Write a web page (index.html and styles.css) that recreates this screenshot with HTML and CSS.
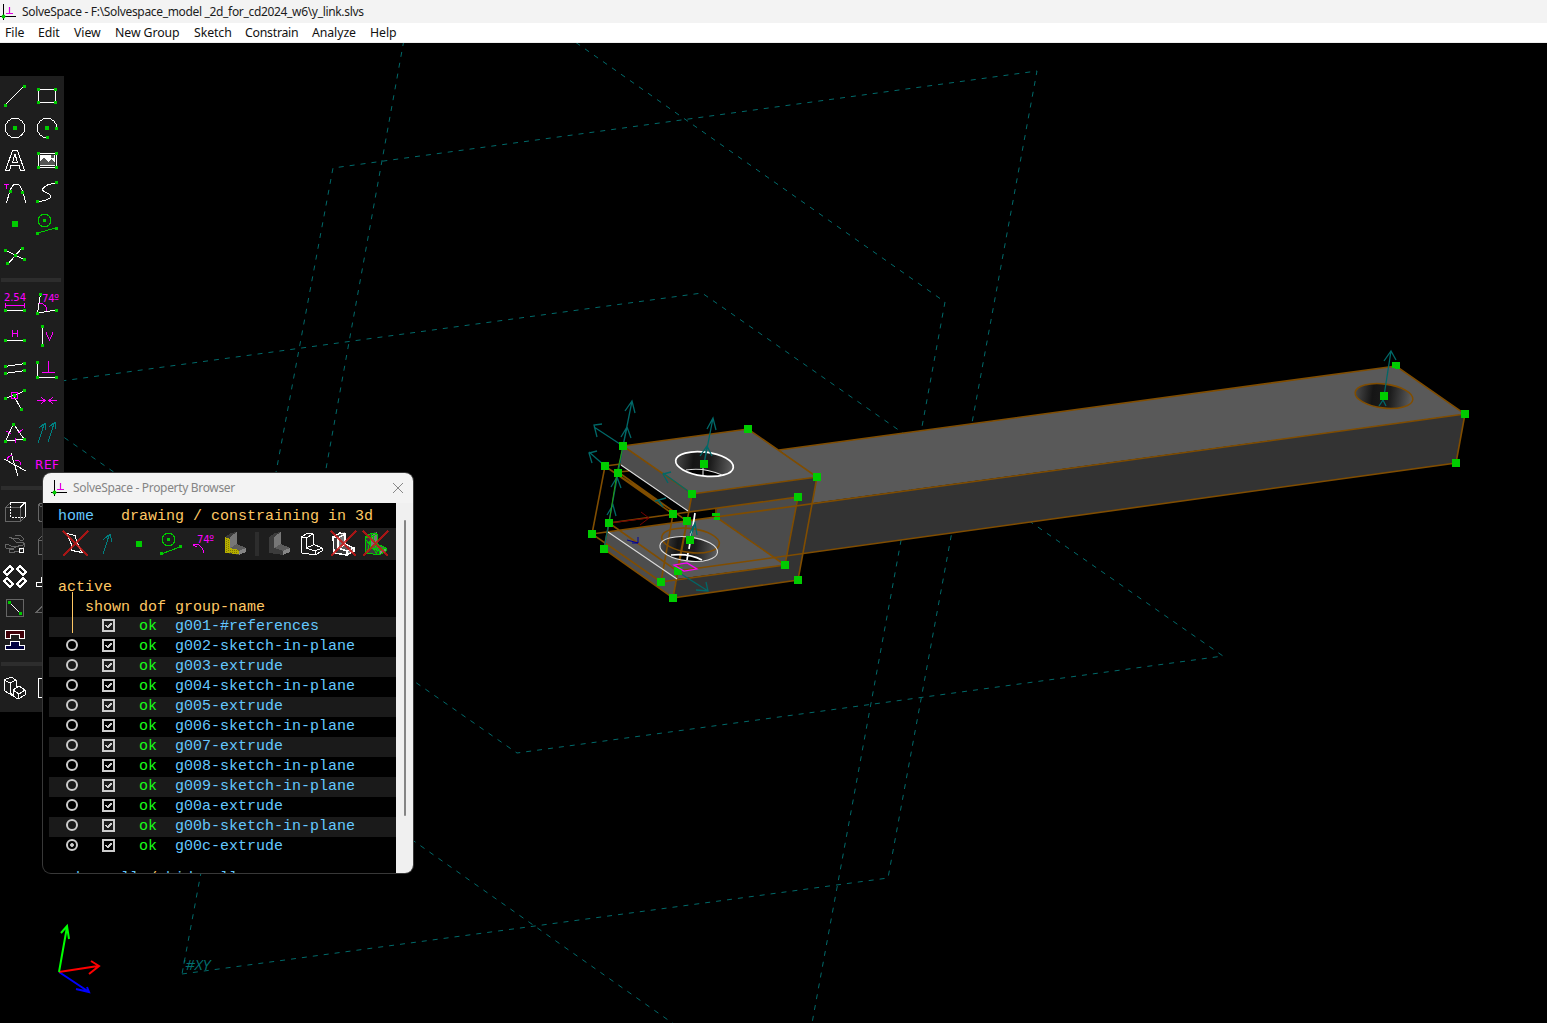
FILE: index.html
```html
<!DOCTYPE html>
<html lang="en">
<head>
<meta charset="utf-8">
<title>SolveSpace</title>
<link rel="stylesheet" href="styles.css">
</head>
<body>
<svg class="defs" width="0" height="0">
  <defs>
    <linearGradient id="hole"><stop offset="0" stop-color="#4a4a4a"/><stop offset=".3" stop-color="#151515"/><stop offset=".6" stop-color="#1c1c1c"/><stop offset="1" stop-color="#606060"/></linearGradient>
    <symbol id="logo" viewBox="0 0 16 16"><path d="M3.500 0v16M0 12.500h16" stroke="#000" fill="none"/><path d="M9.500 3v7M6 9.500h7" stroke="#e000e0" stroke-width="1.200" fill="none"/><circle cx="3.500" cy="12.500" r="1.900" fill="#0c0"/></symbol>
    <symbol id="bracket" viewBox="0 0 32 32"><g stroke="none"><path d="M6 9l6-4 6-1v12l9 4v4l-7 3-14-2z" fill="#3c3c3c"/><path d="M11 9l7-5v12l-7 4z" fill="#777"/><path d="M11 20l7-4 9 4-7 3z" fill="#5c5c5c"/><path d="M20 23l7-3v4l-7 3z" fill="#858585"/></g></symbol>
    <symbol id="bracketWire" viewBox="0 0 32 32"><path fill="none" d="M6 9l7-4 5 1v10l9 4v3l-7 4-13-2z M6 9l5 1v10l9 3v4 M11 10l7-4 M11 20l7-3 M20 23l7-3"/></symbol>
    <symbol id="tick" viewBox="0 0 13 13"><path d="M1 1h11v11H1z" fill="none" stroke="#ccc" stroke-width="2"/><path d="M3.500 6l2.500 2.500L9.500 4" fill="none" stroke="#ccc" stroke-width="2"/></symbol>
  </defs>
</svg>
<header class="titlebar"><svg class="logo"><use href="#logo"/></svg><span class="title">SolveSpace - F:\Solvespace_model _2d_for_cd2024_w6\y_link.slvs</span></header>
<nav class="menu"><span class="file">File</span><span class="edit">Edit</span><span class="view">View</span><span class="group">New Group</span><span class="sketch">Sketch</span><span class="constrain">Constrain</span><span class="analyze">Analyze</span><span class="help">Help</span></nav>
<main class="workspace">
<svg class="scene" viewBox="0 43 1547 980">
  <g class="plane">
    <path d="M182 974L888 878L1037 71L333 168Z"/>
    <path d="M-4 390L702 293L1223 656L517 753Z"/>
    <path d="M423-65L945 302L796 1110L276 744Z"/>
  </g>
  <text class="plane-name" x="182" y="970">'#XY</text>
  <path fill="#595959" d="M779 450L1396 366L1465 414L806 504V470Z"/>
  <path fill="#333" d="M806 504L1465 414L1456 463L800 554Z"/>
  <path fill="#4b4b4b" d="M717 508L798 497L785 565L716 517Z"/>
  <path fill="#595959" d="M608 532L687 521L716 517L785 565L677 579Z"/>
  <path fill="#4d4d4d" d="M608 532L677 579L673 598L604 549Z"/>
  <path fill="#4d4d4d" d="M623 446L692 494L689 512L620 464Z"/>
  <path fill="#595959" d="M623 446L748 429L817 477L692 494Z"/>
  <path fill="#333" d="M692 494L817 477L798 580L673 598L677 579L785 565L798 497L689 512Z"/>
  <g class="hole"><ellipse cx="704.5" cy="464" rx="29" ry="12" transform="rotate(7 704.5 464)"/><ellipse cx="688.7" cy="549" rx="29" ry="12" transform="rotate(7 688.7 549)"/><ellipse cx="1384" cy="396" rx="29" ry="12" transform="rotate(7 1384 396)"/></g>
  <path d="M686 470Q703 466 723 475L714 476Q697 476 686 470ZM671 555Q688 553 704 561Q683 561 671 555Z" fill="#000"/>
  <g class="edge">
    <path d="M779 450L1396 366L1465 414L1456 463L677 571M592 534L1465 414M623 446L748 429L817 477L692 494ZM817 477L798 580L673 598L604 549M609 523L798 497L785 565L661 582L592 534L605 466L673 514L661 582M785 565L716 517V509M692 494L673 598M609 523L677 571L687 521L618 472L629 471M605 466L621 464M609 469L673 511M609 523L604 549"/>
    <ellipse cx="690.5" cy="540.5" rx="29" ry="12" transform="rotate(7 690.5 540.5)"/><ellipse cx="1384" cy="396" rx="29" ry="12" transform="rotate(7 1384 396)"/>
  </g>
  <g class="white-edge"><path d="M621 465L688 511M608 532L677 579"/><ellipse class="strong" cx="704.5" cy="464" rx="29" ry="12" transform="rotate(7 704.5 464)"/><ellipse cx="688.7" cy="549" rx="29" ry="12" transform="rotate(7 688.7 549)"/><path d="M686 470Q704 467 722 475M703 466V475"/><path class="strong" d="M671 555Q689 553 702 560M695 513L693 526M692 530L689 549M688 553L687 560"/></g>
  <g class="normal">
    <path d="M623 446L632 401M625 411L632 401L635 413M623 446L627 427M621 437L627 427L631 438M623 446L594 427M602 424L594 425L597 437M605 466L589 452M597 451L589 453L592 463M704 464L713 418M707 429L713 418L716 430M704 464L707 446M700 456L707 446L712 456M692 494L663 473M671 472L663 474L668 483M678 572L708 591M706 582L708 591L696 590M604 549L623 446M611 487L617 477L621 488M607 515L613 505L616 516M655 501L666 498M658 500L663 507M690 540L695 523M690 533L695 523L697 535M1384 396L1391 351M1384 361L1391 351L1396 360M1379 406L1383 400L1386 406"/>
  </g>
  <path d="M623 446L617 473L609 523" fill="none" stroke="#2a9f12"/>
  <path d="M609 523L649 518M641 512L649 518L640 525" fill="none" stroke="#700"/><path d="M627 540L638 543M638 537V543L632 543" fill="none" stroke="#009"/>
  <path class="point" d="M619 442h8v8h-8zM744 425h8v8h-8zM813 473h8v8h-8zM688 490h8v8h-8zM601 462h8v8h-8zM614 469h8v8h-8zM794 493h8v8h-8zM605 519h8v8h-8zM588 530h8v8h-8zM600 545h8v8h-8zM669 510h8v8h-8zM683 517h8v8h-8zM712 513h8v3h-8zM714 517h6v3h-6zM686 536h8v8h-8zM781 561h8v8h-8zM794 576h8v8h-8zM657 578h8v8h-8zM669 594h8v8h-8zM674 567h8v8h-8zM700 460h8v8h-8zM1392 362h8v6h-8zM1395 367h5v2h-5zM1461 410h8v8h-8zM1452 459h8v8h-8zM1380 392h8v8h-8z"/>
  <path d="M674 565L687 563L697 569L684 571Z" fill="none" stroke="#f0f" stroke-width="1.200"/>
  <g fill="none" stroke-width="2"><path stroke="#00f" d="M59 972L89 992M87 987L89 992L76 989"/><path stroke="red" d="M59 972L98 966M91 961L99 966L89 974"/><path stroke="lime" d="M59 972L67 927M61 933L67 926L69 939"/></g>
</svg>

<aside class="toolbar">
  <svg><path d="M5 25L24 6"/><path class="pts" d="M4 24h3v3h-3zM23 5h3v3h-3z"/></svg>
  <svg><path d="M6.500 9.500h17v13h-17z"/><path class="pts" d="M5 8h3v3h-3zM22 8h3v3h-3zM5 21h3v3h-3zM22 21h3v3h-3z"/></svg>
  <svg><circle cx="15" cy="16" r="9.700"/><path class="pts" d="M13 14h4v4h-4z"/></svg>
  <svg><path d="M24.700 16A9.700 9.700 0 1 0 15 25.700"/><path class="pts" d="M13 14h4v4h-4zM23 15h3v3h-3zM14 24h3v3h-3z"/></svg>
  <svg><path d="M5.500 26.500L12.500 6.500h5L24.500 26.500h-4L19 21.500h-8L9.500 26.500ZM12.500 18.500L15 10l2.500 8.500Z"/></svg>
  <svg><path d="M6.500 9.500h18v14h-18z"/><path fill="#fff" stroke="none" d="M8 11h15v11h-15z"/><path fill="#555" stroke="none" d="M8 21v-3l4-5 4 5 3-3 4 4v2zM19 11h3v3h-3z"/><path class="pts" d="M5 8h3v3h-3zM23 8h3v3h-3zM5 22h3v3h-3zM23 22h3v3h-3z"/></svg>
  <svg><path d="M6.500 27C9 18 11 8 16 8S24 18 25.500 27"/><path class="mag" d="M4 8h5M6.500 8v5"/><path class="pts" d="M9 14h3v3h-3zM21 15h3v3h-3z"/></svg>
  <svg><path d="M24 7Q14 8 10.500 13Q10 15 15 17T18 22Q14 25 5 25.500"/><path class="pts" d="M23 5h3v3h-3zM4 24h3v3h-3z"/></svg>
  <svg><path class="pts" d="M12 13h6v6h-6z"/></svg>
  <svg><g class="green"><circle cx="12.500" cy="12.500" r="6.300"/><path d="M5 25L24 20"/></g><path class="pts" d="M11 11h3v3h-3zM4 24h3v3h-3zM23 19h3v3h-3z"/></svg>
  <svg><path d="M5 10L25 20M22 8L8 24"/><path class="pts" d="M4 9h3v3h-3zM23 18h3v3h-3zM21 7h3v3h-3zM6 22h3v3h-3zM14 14h3v3h-3z"/></svg>
  <i></i>
  <hr>
  <svg><text x="4" y="13" textLength="22">2.54</text><path class="mag" d="M5.500 15v5M24.500 15v5M5 17.500h20"/><path d="M5 22.500h20"/><path class="pts" d="M4 21h3v3h-3zM23 21h3v3h-3z"/></svg>
  <svg><path d="M8.500 6L5.500 25L25 22"/><path class="mag" d="M7 15Q15 16 15 23"/><text x="10" y="14" textLength="17">74º</text><path class="pts" d="M7 5h3v3h-3zM4 24h3v3h-3zM23 21h3v3h-3z"/></svg>
  <svg><path class="mag" d="M12.500 10v7M17.500 10v7M12.500 13.500h5"/><path d="M5 20.500h20"/><path class="pts" d="M4 19h3v3h-3zM23 19h3v3h-3z"/></svg>
  <svg><path d="M10.500 7v19"/><path class="mag" d="M14.500 12v2l3 6 3-6v-2"/><path class="pts" d="M9 5h3v3h-3zM9 24h3v3h-3z"/></svg>
  <svg><path d="M5 14.500L25 11.500M5 21.500L25 18.500"/><path class="pts" d="M4 13h3v3h-3zM23 10h3v3h-3zM4 20h3v3h-3zM23 17h3v3h-3z"/></svg>
  <svg><path d="M5.500 10v15.500h20"/><path class="mag" d="M16.500 9v11.500M10 20.500h13"/><path class="pts" d="M4 9h3v3h-3zM4 24h3v3h-3zM23 24h3v3h-3z"/></svg>
  <svg><path d="M5 14.500L25 7M14 12L21 25"/><path class="mag" d="M11.500 8.500h6v6h-6z"/><path class="pts" d="M4 13h3v3h-3zM23 5h3v3h-3zM20 24h3v3h-3zM13 10h3v3h-3z"/></svg>
  <svg><path class="mag" d="M5 16.500h8M9 13l4 3.500-4 3.500M25 16.500h-8M21 13l-4 3.500 4 3.500"/></svg>
  <svg><path d="M13.500 8L5.500 25L24 23Z"/><path class="mag" d="M6 15l5 3M18 17l5-4M15 22v5"/><path class="pts" d="M12 7h3v3h-3zM4 24h3v3h-3zM23 22h3v3h-3z"/></svg>
  <svg class="teal"><path d="M6 27L12.500 7M7 12l6-5 1 7M16 26L22.500 6M17 11l6-5 1 7"/></svg>
  <svg><path d="M4 11L26 23M11 5L18 28"/><path class="mag" d="M7 12Q8 7 12 8M15 12Q22 12 21 20"/></svg>
  <svg><text class="ref" x="3" y="21" textLength="24">REF</text></svg>
  <hr>
  <svg><path class="gray" d="M5.500 11.500h15v14h-15zM5.500 11.500l5-5M20.500 25.500l5-5"/><path d="M10 6.500h15v14M20 11.500l5-5"/><path stroke-dasharray="2 1" d="M10.500 7v14h14"/></svg>
  <svg><path class="gray" d="M6 9Q10 5 16 9v15Q10 28 6 24zM6 9q5 4 10 0"/></svg>
  <svg><path class="gray" d="M15 7l5 0 4 4-2 2-5-3-4 1 3 3 8 0-1 3-9 2-8-3M9 9l5 2M5 16l1 4 5 1 8-3M24 15v4l-5 4-9 2-1-3 5-1"/><circle cx="21.500" cy="22.500" r="2.300"/></svg>
  <svg><path class="gray" d="M6 12l4-4h14v14l-4 4h-14zM6 12h14"/></svg>
  <svg><path class="thick" d="M4 12l6-6 3 3-6 6zM17 9l3-3 6 6-3 3zM4 21l3-3 6 6-3 3zM17 24l6-6 3 3-6 6z"/></svg>
  <svg><path d="M4.500 22.500h12v4h-12zM9.500 17.500h8v5h-8z"/></svg>
  <svg><path class="gray" d="M6.500 7.500h17v17h-17z"/><path d="M10 11l11 11"/><path class="pts" d="M8 9h3v3h-3zM19 20h3v3h-3z"/></svg>
  <svg><path class="gray" d="M4 20.500h16v-16z"/></svg>
  <svg><path fill="#400008" d="M5.500 6.500h19v8h-5v-4h-9v4h-5z"/><path fill="#000040" d="M10.500 17.500h9v4h5v4h-19v-4h5z"/></svg>
  <i></i>
  <hr>
  <svg><path d="M4 8l7-3 5 3v8l3-2 6 4v5l-7 4-5-3-8-5zM4 8l6 3 6-3M10 11v10l3 2v-5l3-2M13 18l6 4 6-4M18 22v5"/></svg>
  <svg><path d="M6.500 6.500h18v19h-18z"/></svg>
</aside>

<section class="browser">
  <header class="browser-title"><svg class="logo"><use href="#logo"/></svg><span>SolveSpace - Property Browser</span><svg class="close" viewBox="0 0 12 12"><path d="M1 1l10 10M11 1L1 11"/></svg></header>
  <div class="browser-body">
    <div class="page">
      <div class="crumb"><a>home</a><span>drawing / constraining in 3d</span></div>
      <div class="view-tools">
        <svg><path d="M8 5.500l8 2 2 7 5 10-10-2-1-7z"/><path class="red" d="M4 3l25 25M29 3L4 28"/></svg>
        <svg class="teal"><path d="M12 26L18.500 6M12 12l7-6 2 8"/></svg>
        <svg><path class="pts" d="M13 13h6v6h-6z"/></svg>
        <svg><g class="green"><circle cx="13.500" cy="11.500" r="6.300"/><path d="M6 26L25 19"/></g><path class="pts" d="M12 10h3v3h-3zM5 24h3v3h-3zM24 17h3v3h-3z"/></svg>
        <svg><text x="10" y="15" textLength="17">74º</text><path class="mag" d="M6 16.500h5Q16 19 16.500 25M6 17l4 2"/></svg>
        <svg><use href="#bracket"/><path fill="#b5ad00" stroke="none" d="M6 9l5 2v9l9 2v4l-14-1z"/><path stroke="#7d7600" stroke-dasharray="1 1" d="M7.500 11v13M9.500 12v12M11 22.500h9M11 24.500h8"/></svg>
        <b></b>
        <svg><use href="#bracket"/></svg>
        <svg><use class="wire" href="#bracketWire"/></svg>
        <svg><use href="#bracket"/><use class="thick" href="#bracketWire"/><path class="red" d="M4 3l25 25M29 3L4 28"/></svg>
        <svg><use href="#bracket"/><g class="green"><use class="wire" href="#bracketWire"/><path d="M7 12l12 15M13 5l-5 20M14 9l5 15M12 20l15 1"/></g><path class="red" d="M4 3l25 25M29 3L4 28"/></svg>
      </div>
      <div class="active">active</div>
      <div class="row head"><span></span><span>shown</span><span>dof</span><span>group-name</span></div>
      <div class="row"><i class="stem"></i><svg class="check"><use href="#tick"/></svg><em>ok</em><a>g001-#references</a></div>
      <div class="row"><i class="radio"></i><svg class="check"><use href="#tick"/></svg><em>ok</em><a>g002-sketch-in-plane</a></div>
      <div class="row"><i class="radio"></i><svg class="check"><use href="#tick"/></svg><em>ok</em><a>g003-extrude</a></div>
      <div class="row"><i class="radio"></i><svg class="check"><use href="#tick"/></svg><em>ok</em><a>g004-sketch-in-plane</a></div>
      <div class="row"><i class="radio"></i><svg class="check"><use href="#tick"/></svg><em>ok</em><a>g005-extrude</a></div>
      <div class="row"><i class="radio"></i><svg class="check"><use href="#tick"/></svg><em>ok</em><a>g006-sketch-in-plane</a></div>
      <div class="row"><i class="radio"></i><svg class="check"><use href="#tick"/></svg><em>ok</em><a>g007-extrude</a></div>
      <div class="row"><i class="radio"></i><svg class="check"><use href="#tick"/></svg><em>ok</em><a>g008-sketch-in-plane</a></div>
      <div class="row"><i class="radio"></i><svg class="check"><use href="#tick"/></svg><em>ok</em><a>g009-sketch-in-plane</a></div>
      <div class="row"><i class="radio"></i><svg class="check"><use href="#tick"/></svg><em>ok</em><a>g00a-extrude</a></div>
      <div class="row"><i class="radio"></i><svg class="check"><use href="#tick"/></svg><em>ok</em><a>g00b-sketch-in-plane</a></div>
      <div class="row"><i class="radio on"></i><svg class="check"><use href="#tick"/></svg><em>ok</em><a>g00c-extrude</a></div>
      <div class="all"><a>show all</a> / <a>hide all</a></div>
    </div>
    <div class="scroll"><i></i></div>
  </div>
</section>
</main>
</body>
</html>
```
FILE: styles.css
```css
* { box-sizing: border-box; }
body { margin: 0; width: 1547px; height: 1023px; overflow: hidden; background: #000; display: flex; flex-direction: column; font: 12.3px/20px "Noto Sans", sans-serif; }
.defs { position: absolute; }
.titlebar { height: 23px; flex: none; background: #f3f3f3; display: flex; align-items: center; gap: 6px; color: #1c1c1c; }
.logo { width: 16px; height: 16px; flex: none; }
.title { font-size: 12px; white-space: pre; letter-spacing: -0.33px; }
.menu { height: 20px; flex: none; background: #fff; display: flex; padding-left: 5px; border-bottom: 1px solid #eee; color: #111; white-space: nowrap; line-height: 20px; letter-spacing: -0.08px; }
.file { width: 33px; }
.edit { width: 36px; }
.view { width: 41px; }
.group { width: 79px; }
.sketch { width: 51px; }
.constrain { width: 67px; letter-spacing: -0.25px; }
.analyze { width: 58px; }
.workspace { flex: 1; position: relative; overflow: hidden; }
.scene { display: block; width: 1547px; height: 980px; }
.plane { fill: none; stroke: #006a6a; stroke-dasharray: 5 6; }
.plane-name { font: italic 15px "Open Sans", sans-serif; fill: #007070; }
.hole { fill: url(#hole); }
.edge { fill: none; stroke: #804d00; stroke-width: 1.6; }
.white-edge { fill: none; stroke: #ddd; stroke-width: 1.1; }
.strong { stroke: #fff; stroke-width: 1.7; }
.normal { fill: none; stroke: #006868; stroke-width: 1.3; }
.point { fill: #00cc00; shape-rendering: crispEdges; }

.toolbar { position: absolute; left: 0; top: 33px; width: 64px; height: 636px; padding-top: 4px; background: #1e1e1e; display: grid; grid-template-columns: 32px 32px; align-content: start; }
.toolbar hr { grid-column: 1 / 3; width: 60px; height: 4px; border: 0; margin: 6px 0 6px 1px; background: #2d2d2d; }
.toolbar svg, .toolbar i, .view-tools svg { width: 32px; height: 32px; display: block; flex: none; fill: none; stroke: #fff; stroke-width: 1; shape-rendering: crispEdges; }
.toolbar text, .view-tools text { font: 10px "DejaVu Sans", sans-serif; fill: #f0f; stroke: none; }
.toolbar text.ref { font-size: 12px; }
.pts { fill: #00cc00; stroke: none; shape-rendering: geometricPrecision; }
.mag { stroke: #f0f; }
.green { stroke: #00cc00; }
.toolbar .gray { stroke: #666; }
.toolbar .teal, .view-tools .teal { stroke: #008080; }
.thick { stroke-width: 1.5; }
.wire { stroke-width: 1; }
.red { stroke: #c81414; stroke-width: 2; stroke-opacity: .8; }

.browser { position: absolute; left: 43px; top: 430px; width: 370px; height: 400px; border-radius: 8px; overflow: hidden; background: #000; box-shadow: 0 0 0 1px #383838; }
.browser-title { height: 30px; background: #f3f3f3; display: flex; align-items: center; padding: 0 9px 0 8px; color: #858585; font-size: 12px; letter-spacing: -0.33px; }
.browser-title span { margin-left: 6px; flex: 1; }
.browser-title .close { width: 12px; height: 12px; fill: none; stroke: #888; }
.browser-body { display: flex; height: 370px; }
.page { width: 353px; overflow: hidden; font: 15px/24px "Liberation Mono", monospace; color: #ffc864; white-space: nowrap; }
.page a { color: #64c8ff; }
.crumb { height: 25px; padding: 2px 0 0 15px; display: flex; gap: 27px; }
.view-tools { height: 32px; background: #1e1e1e; display: flex; padding-left: 16px; }
.view-tools b { width: 4px; height: 24px; margin: 4px; background: #2d2d2d; flex: none; }
.active { margin-top: 16px; padding-left: 15px; height: 20px; }
.row { height: 20px; margin-left: 6px; display: grid; grid-template-columns: 36px 54px 36px auto; position: relative; align-items: start; }
.head { height: 21px; }
.head ~ .row { line-height: 20px; }
.row:nth-child(odd) { background: #1a1a1a; }
.row em { font-style: normal; color: #19ff19; }
.check { width: 13px; height: 13px; margin: 2px 0 0 17px; shape-rendering: crispEdges; grid-column: 2; }
.radio { width: 12px; height: 12px; border: 2px solid #ccc; border-radius: 50%; margin: 2px 0 0 17px; }
.on { background: radial-gradient(circle, #ccc 1.5px, transparent 2.2px); }
.stem { position: absolute; left: 23px; top: -25px; width: 1px; height: 41px; background: #ffc864; }
.all { margin-top: 12px; padding-left: 24px; line-height: 20px; }
.scroll { width: 17px; background: #f0f0f0; padding: 17px 0 0 8px; }
.scroll i { display: block; width: 2px; height: 296px; border-radius: 1px; background: #858585; }
```
